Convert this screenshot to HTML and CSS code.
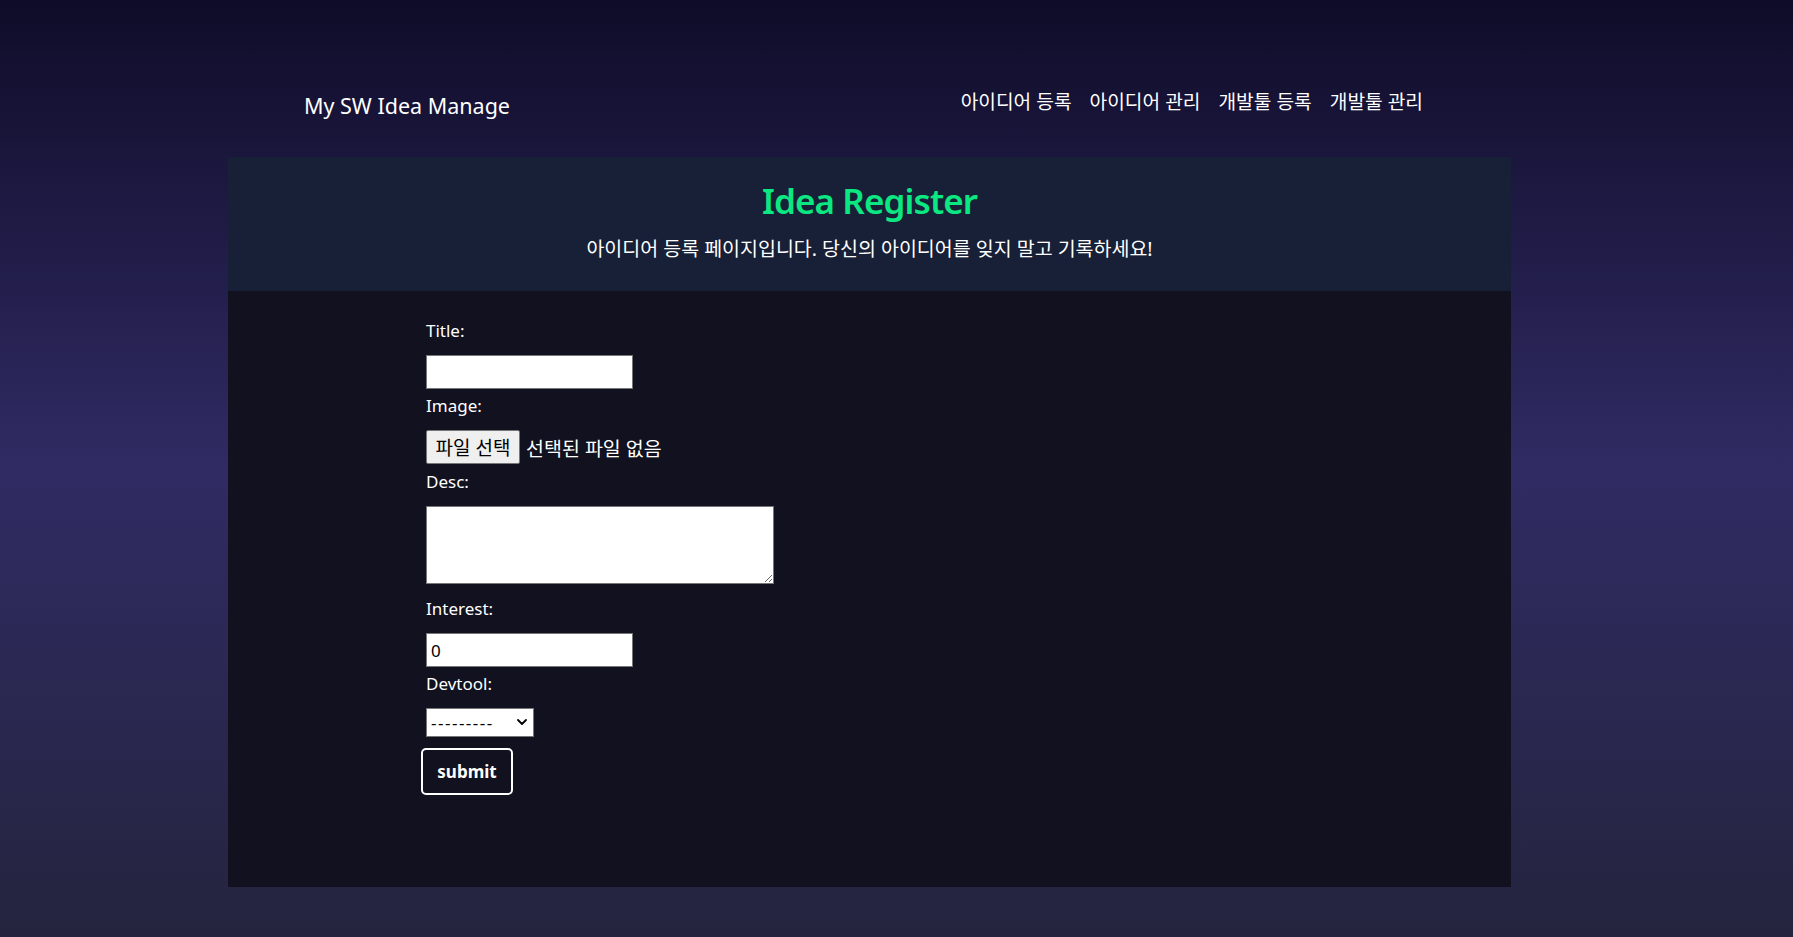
FILE: index.html
```html
<!DOCTYPE html>
<html lang="ko">
<head>
<meta charset="utf-8">
<title>My SW Idea Manage</title>
<link rel="stylesheet" href="styles.css">
</head>
<body>
<div class="page">
  <header class="topbar">
    <a class="brand" href="#">My SW Idea Manage</a>
    <nav class="nav">
      <a href="#">아이디어 등록</a>
      <a href="#">아이디어 관리</a>
      <a href="#">개발툴 등록</a>
      <a href="#">개발툴 관리</a>
    </nav>
  </header>
  <main class="panel">
    <section class="panel-head">
      <h1 class="panel-title">Idea Register</h1>
      <p class="panel-sub">아이디어 등록 페이지입니다. 당신의 아이디어를 잊지 말고 기록하세요!</p>
    </section>
    <section class="panel-body">
      <form class="idea-form">
        <div class="field">
          <label class="field-label" for="title">Title:</label>
          <input class="text-input" type="text" id="title">
        </div>
        <div class="field field-file">
          <label class="field-label" for="image">Image:</label>
          <div class="file-row">
            <span class="file-btn">파일 선택</span>
            <span class="file-name">선택된 파일 없음</span>
          </div>
        </div>
        <div class="field field-desc">
          <label class="field-label" for="desc">Desc:</label>
          <textarea class="text-area" id="desc"></textarea>
        </div>
        <div class="field">
          <label class="field-label" for="interest">Interest:</label>
          <input class="text-input" type="number" id="interest" value="0">
        </div>
        <div class="field">
          <label class="field-label" for="devtool">Devtool:</label>
          <span class="select-wrap">
            <select class="select" id="devtool">
              <option>---------</option>
            </select>
            <svg class="select-arrow" width="10" height="6" viewBox="0 0 10 6" aria-hidden="true">
              <path d="M1 1 L5 5 L9 1" fill="none" stroke="#000" stroke-width="1.8" stroke-linecap="round" stroke-linejoin="round"/>
            </svg>
          </span>
        </div>
        <button class="submit-btn" type="submit">submit</button>
      </form>
    </section>
  </main>
</div>
</body>
</html>
```

FILE: styles.css
```css
* { box-sizing: border-box; }

html, body {
  margin: 0;
  padding: 0;
}

body {
  min-height: 100vh;
  background: linear-gradient(to bottom, #0f0c29, #302b63, #24243e);
  font-family: "Noto Sans", "Noto Sans CJK KR", sans-serif;
  color: #ffffff;
  overflow: hidden;
}

.page {
  width: 1283px;
  margin-left: 228px;
}

.topbar {
  height: 157px;
  display: flex;
  justify-content: space-between;
  align-items: flex-start;
  padding: 0 88px 0 76px;
}

.brand {
  margin-top: 91px;
  font-size: 21.5px;
  line-height: 30px;
  color: #ffffff;
  text-decoration: none;
}

.nav {
  margin-top: 89px;
  display: flex;
  gap: 18px;
  font-size: 19.2px;
  line-height: 25px;
}

.nav a {
  color: #ffffff;
  text-decoration: none;
}

.panel {
  height: 730px;
  display: flex;
  flex-direction: column;
}

.panel-head {
  height: 134px;
  background: #172036;
  text-align: center;
  padding-top: 22px;
}

.panel-title {
  margin: 0;
  font-size: 35px;
  line-height: 44px;
  font-weight: 600;
  letter-spacing: -0.9px;
  color: #0be881;
}

.panel-sub {
  margin: 13px 0 0;
  font-size: 19.5px;
  line-height: 26px;
}

.panel-body {
  flex: 1;
  background: #11111f;
  padding: 28px 0 0 198px;
}

.idea-form {
  display: flex;
  flex-direction: column;
  align-items: flex-start;
}

.field {
  display: flex;
  flex-direction: column;
  align-items: flex-start;
  margin-bottom: 5px;
}

.field-file {
  margin-bottom: 6px;
}

.field-desc {
  margin-bottom: 13px;
}

.field-label {
  display: block;
  font-size: 17px;
  line-height: 24px;
  margin-bottom: 12px;
}

.text-input {
  width: 207px;
  height: 34px;
  border: 1px solid #767676;
  background: #ffffff;
  padding: 0 4px;
  font-family: inherit;
  font-size: 17px;
  color: #000000;
  -moz-appearance: textfield;
  appearance: textfield;
}

.text-input::-webkit-inner-spin-button,
.text-input::-webkit-outer-spin-button {
  -webkit-appearance: none;
  margin: 0;
}

.file-row {
  display: flex;
  align-items: center;
  gap: 6px;
  font-size: 19.5px;
}

.file-btn {
  width: 94px;
  height: 34px;
  display: flex;
  align-items: center;
  justify-content: center;
  background: #efefef;
  color: #000000;
  border: 1px solid #767676;
  border-radius: 2px;
  font-size: 19px;
}

.file-name {
  color: #ffffff;
}

.text-area {
  width: 348px;
  height: 78px;
  border: 1px solid #767676;
  background: #ffffff;
  font-family: inherit;
  font-size: 16px;
  padding: 2px;
}

.select-wrap {
  position: relative;
  display: inline-block;
  width: 108px;
  height: 29px;
}

.select {
  width: 108px;
  height: 29px;
  border: 1px solid #767676;
  border-radius: 0;
  background: #ffffff;
  color: #000000;
  font-family: inherit;
  font-size: 17px;
  letter-spacing: 1.5px;
  padding: 0 20px 0 4px;
  -webkit-appearance: none;
  appearance: none;
}

.select-arrow {
  position: absolute;
  right: 7px;
  top: 11px;
  pointer-events: none;
}

.submit-btn {
  margin-top: 6px;
  margin-left: -5px;
  width: 92px;
  height: 47px;
  border: 2px solid #ffffff;
  border-radius: 5px;
  background: transparent;
  color: #ffffff;
  font-family: inherit;
  font-size: 17px;
  font-weight: 700;
  cursor: pointer;
}
```
